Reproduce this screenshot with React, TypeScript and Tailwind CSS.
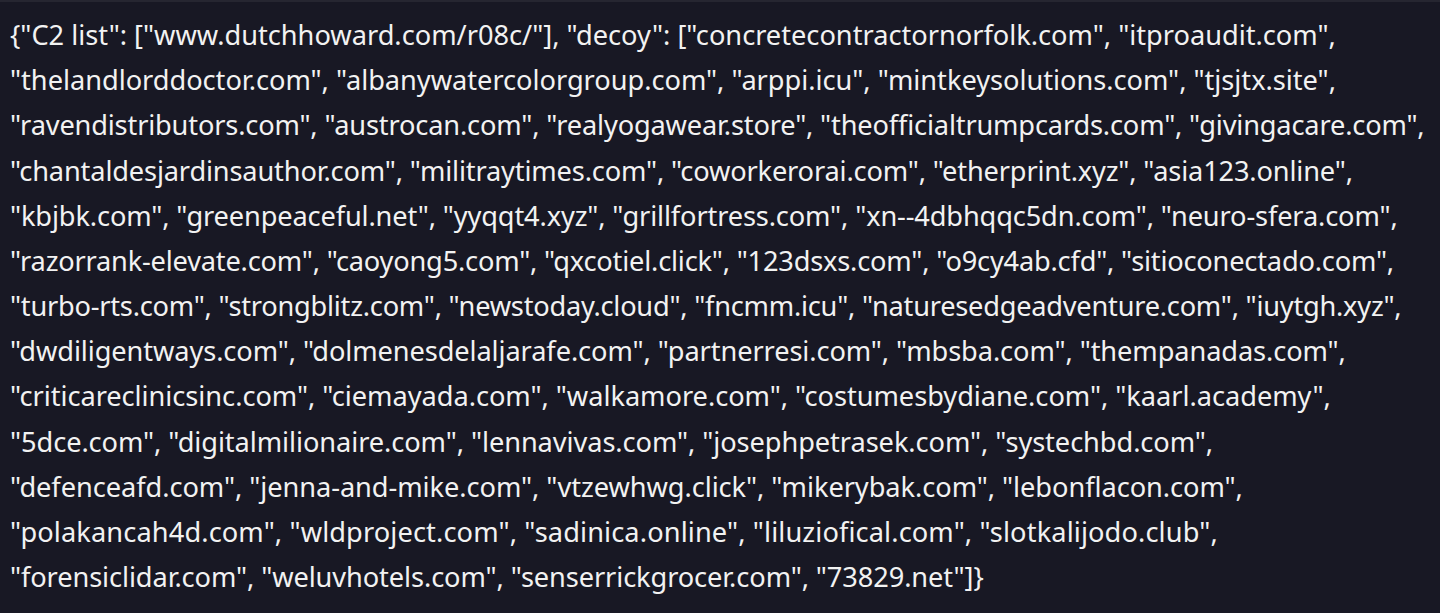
import React from "react";

const lines: [string, string][] = [
  ['{"C2 list": ["www.dutchhoward.com/r08c/"], "decoy": ["concretecontractornorfolk.com", "itproaudit.com",', "tracking-[0px]"],
  ['"thelandlorddoctor.com", "albanywatercolorgroup.com", "arppi.icu", "mintkeysolutions.com", "tjsjtx.site",', "tracking-[-0.02px]"],
  ['"ravendistributors.com", "austrocan.com", "realyogawear.store", "theofficialtrumpcards.com", "givingacare.com",', "tracking-[-0.16px]"],
  ['"chantaldesjardinsauthor.com", "militraytimes.com", "coworkerorai.com", "etherprint.xyz", "asia123.online",', "tracking-[-0.15px]"],
  ['"kbjbk.com", "greenpeaceful.net", "yyqqt4.xyz", "grillfortress.com", "xn--4dbhqqc5dn.com", "neuro-sfera.com",', "tracking-[-0.13px]"],
  ['"razorrank-elevate.com", "caoyong5.com", "qxcotiel.click", "123dsxs.com", "o9cy4ab.cfd", "sitioconectado.com",', "tracking-[-0.19px]"],
  ['"turbo-rts.com", "strongblitz.com", "newstoday.cloud", "fncmm.icu", "naturesedgeadventure.com", "iuytgh.xyz",', "tracking-[-0.23px]"],
  ['"dwdiligentways.com", "dolmenesdelaljarafe.com", "partnerresi.com", "mbsba.com", "thempanadas.com",', "tracking-[-0.09px]"],
  ['"criticareclinicsinc.com", "ciemayada.com", "walkamore.com", "costumesbydiane.com", "kaarl.academy",', "tracking-[-0.03px]"],
  ['"5dce.com", "digitalmilionaire.com", "lennavivas.com", "josephpetrasek.com", "systechbd.com",', "tracking-[-0.07px]"],
  ['"defenceafd.com", "jenna-and-mike.com", "vtzewhwg.click", "mikerybak.com", "lebonflacon.com",', "tracking-[-0.05px]"],
  ['"polakancah4d.com", "wldproject.com", "sadinica.online", "liluziofical.com", "slotkalijodo.club",', "tracking-[0.12px]"],
  ['"forensiclidar.com", "weluvhotels.com", "senserrickgrocer.com", "73829.net"]}', "tracking-[-0.09px]"],
];

export default function App() {
  return (
    <div className="w-[1440px] h-[613px] bg-[#181824] border-t-2 border-[#262631] overflow-hidden">
      <div
        className="pl-[10px] pt-[10px] text-[#f2f2f2] text-[27.2px] leading-[45.17px]"
        style={{ fontFamily: '"Noto Sans", "Open Sans", sans-serif' }}
      >
        {lines.map(([l, t], i) => (
          <div key={i} className={"whitespace-pre " + t}>
            {l}
          </div>
        ))}
      </div>
    </div>
  );
}
